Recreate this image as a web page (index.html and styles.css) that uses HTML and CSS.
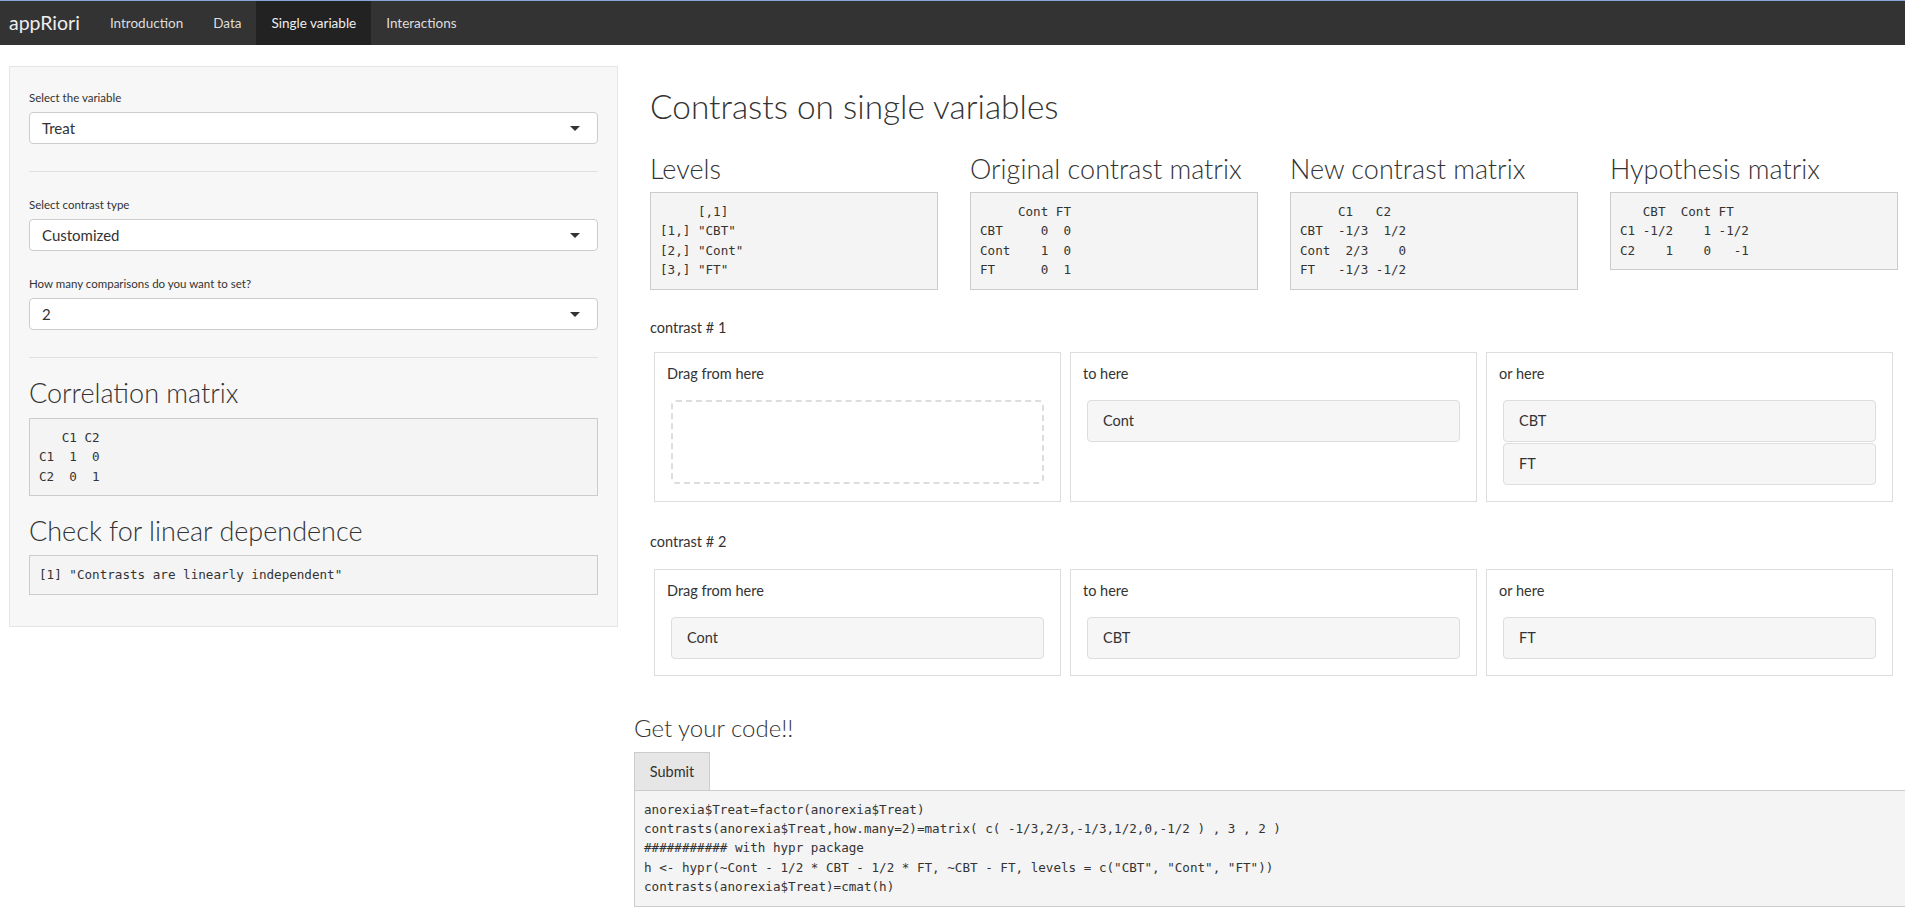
FILE: index.html
```
<!DOCTYPE html>
<html lang="en">
<head>
<meta charset="utf-8">
<title>appRiori</title>
<link rel="stylesheet" href="styles.css">
</head>
<body>
<nav class="navbar">
  <span class="brand">appRiori</span>
  <ul class="nav">
    <li><a>Introduction</a></li>
    <li><a>Data</a></li>
    <li class="active"><a>Single variable</a></li>
    <li><a>Interactions</a></li>
  </ul>
</nav>

<div class="layout">
  <aside class="well">
    <div class="field">
      <label class="label">Select the variable</label>
      <div class="select"><span>Treat</span><i class="caret"></i></div>
    </div>
    <hr class="rule">
    <div class="field">
      <label class="label">Select contrast type</label>
      <div class="select"><span>Customized</span><i class="caret"></i></div>
    </div>
    <div class="field field-second">
      <label class="label">How many comparisons do you want to set?</label>
      <div class="select"><span>2</span><i class="caret"></i></div>
    </div>
    <hr class="rule tight">
    <h3 class="h2 side-h">Correlation matrix</h3>
    <pre class="out">   C1 C2
C1  1  0
C2  0  1</pre>
    <h3 class="h2 side-h second">Check for linear dependence</h3>
    <pre class="out">[1] "Contrasts are linearly independent"</pre>
  </aside>

  <main class="main">
    <section class="upper">
      <h1 class="h1">Contrasts on single variables</h1>
      <div class="matrices">
        <div class="mat">
          <h3 class="h2">Levels</h3>
          <pre class="out">     [,1]  
[1,] "CBT" 
[2,] "Cont"
[3,] "FT"  </pre>
        </div>
        <div class="mat">
          <h3 class="h2">Original contrast matrix</h3>
          <pre class="out">     Cont FT
CBT     0  0
Cont    1  0
FT      0  1</pre>
        </div>
        <div class="mat">
          <h3 class="h2">New contrast matrix</h3>
          <pre class="out">     C1   C2  
CBT  -1/3  1/2
Cont  2/3    0
FT   -1/3 -1/2</pre>
        </div>
        <div class="mat">
          <h3 class="h2">Hypothesis matrix</h3>
          <pre class="out">   CBT  Cont FT  
C1 -1/2    1 -1/2
C2    1    0   -1</pre>
        </div>
      </div>

      <p class="contrast-label first">contrast # 1</p>
      <div class="buckets">
        <div class="bucket">
          <div class="bucket-title">Drag from here</div>
          <div class="rank-list empty"></div>
        </div>
        <div class="bucket">
          <div class="bucket-title">to here</div>
          <div class="rank-list">
            <div class="item">Cont</div>
          </div>
        </div>
        <div class="bucket">
          <div class="bucket-title">or here</div>
          <div class="rank-list">
            <div class="item">CBT</div>
            <div class="item">FT</div>
          </div>
        </div>
      </div>

      <p class="contrast-label second">contrast # 2</p>
      <div class="buckets">
        <div class="bucket">
          <div class="bucket-title">Drag from here</div>
          <div class="rank-list">
            <div class="item">Cont</div>
          </div>
        </div>
        <div class="bucket">
          <div class="bucket-title">to here</div>
          <div class="rank-list">
            <div class="item">CBT</div>
          </div>
        </div>
        <div class="bucket">
          <div class="bucket-title">or here</div>
          <div class="rank-list">
            <div class="item">FT</div>
          </div>
        </div>
      </div>
    </section>

    <h3 class="h3 code-h">Get your code!!</h3>
    <button class="btn">Submit</button>
    <pre class="out code">anorexia$Treat=factor(anorexia$Treat)
contrasts(anorexia$Treat,how.many=2)=matrix( c( -1/3,2/3,-1/3,1/2,0,-1/2 ) , 3 , 2 )
########### with hypr package
h &lt;- hypr(~Cont - 1/2 * CBT - 1/2 * FT, ~CBT - FT, levels = c("CBT", "Cont", "FT"))
contrasts(anorexia$Treat)=cmat(h)</pre>
  </main>
</div>
</body>
</html>
```

FILE: styles.css
```
* { box-sizing: border-box; }

html, body {
  margin: 0;
  padding: 0;
  overflow: hidden;
}

body {
  font-family: Lato, "Open Sans", sans-serif;
  color: #333;
  background: #fff;
  width: 1905px;
  height: 923px;
}

.navbar {
  height: 45px;
  background: #333;
  border-top: 1px solid #8aa6d6;
  display: flex;
  align-items: center;
}

.brand {
  color: #eee;
  font-size: 19.5px;
  padding: 0 15px 0 9px;
  line-height: 44px;
}

.nav {
  list-style: none;
  margin: 0;
  padding: 0;
  display: flex;
  height: 44px;
}

.nav li a {
  display: block;
  padding: 0 15px;
  line-height: 44px;
  color: #ddd;
  font-size: 13.5px;
}

.nav li.active a {
  background: #222;
  color: #eee;
}

.layout {
  display: flex;
  gap: 16px;
  padding: 21px 0 0 9px;
  width: 2000px;
}

.well {
  flex: none;
  width: 609px;
  height: 561px;
  background: #f7f7f7;
  border: 1px solid #e5e5e5;
  padding: 23px 19px 0;
}

.field { display: flex; flex-direction: column; }
.field-second { margin-top: 25px; }

.label {
  font-size: 11.5px;
  line-height: 16px;
  color: #333;
  margin-bottom: 6px;
}

.select {
  height: 32px;
  background: #fff;
  border: 1px solid #ccc;
  border-radius: 4px;
  display: flex;
  align-items: center;
  justify-content: space-between;
  padding: 0 17px 0 12px;
  font-size: 15px;
  color: #333;
}

.caret {
  width: 0;
  height: 0;
  border-left: 5px solid transparent;
  border-right: 5px solid transparent;
  border-top: 5px solid #333;
}

.rule {
  border: 0;
  border-top: 1px solid #e0e0e0;
  margin: 27px 0 25px;
}

.rule.tight { margin-bottom: 21px; }

.h1 {
  font-weight: 300;
  font-size: 33.4px;
  line-height: 36px;
  margin: 22px 0 0;
  color: #333;
}

.h2 {
  font-weight: 300;
  font-size: 27px;
  line-height: 28px;
  margin: 0;
  color: #333;
}

.h3 {
  font-weight: 300;
  font-size: 24px;
  line-height: 28px;
  margin: 0;
  color: #333;
}

.side-h { margin-top: 0; margin-bottom: 11px; }
.side-h.second { margin-top: 21px; margin-bottom: 10px; }

.out {
  margin: 0;
  background: #f4f4f4;
  border: 1px solid #ccc;
  padding: 9px 9px;
  font-family: "DejaVu Sans Mono", "Liberation Mono", monospace;
  font-size: 12.6px;
  line-height: 19.4px;
  color: #333;
  white-space: pre;
  overflow: hidden;
}

.main {
  flex: none;
  width: 1290px;
}

.upper { padding: 0 16px; }

.matrices {
  display: grid;
  grid-template-columns: repeat(4, 288px);
  column-gap: 32px;
  align-items: start;
  margin-top: 31px;
}

.mat .h2 { margin-bottom: 9px; }

.contrast-label {
  font-size: 14.5px;
  line-height: 20px;
  margin: 0;
}
.contrast-label.first { margin-top: 28px; margin-bottom: 14px; }
.contrast-label.second { margin-top: 30px; margin-bottom: 17px; }

.buckets {
  display: grid;
  grid-template-columns: repeat(3, 407px);
  column-gap: 9px;
  margin-left: 4px;
  align-items: stretch;
}

.bucket {
  border: 1px solid #ddd;
  padding: 10px 12px 16px;
  background: #fff;
}

.bucket-title {
  font-size: 14.5px;
  line-height: 22px;
  margin-bottom: 15px;
  color: #333;
}

.rank-list { margin: 0 4px; }

.rank-list.empty {
  height: 84px;
  border: 2px dashed #ddd;
  border-radius: 5px;
}

.item {
  background: #f6f6f6;
  border: 1px solid #ddd;
  border-radius: 4px;
  padding: 0 15px;
  height: 42px;
  line-height: 40px;
  font-size: 14.5px;
  color: #333;
  margin-bottom: 1px;
}

.item:last-child { margin-bottom: 0; }

.code-h { margin-top: 38px; }

.btn {
  display: block;
  margin-top: 10px;
  width: 76px;
  height: 38px;
  background: #e6e6e6;
  border: 1px solid #ccc;
  border-bottom: 0;
  font-family: Lato, "Open Sans", sans-serif;
  font-size: 14.5px;
  color: #333;
  padding: 0;
}

.code {
  width: 1290px;
  padding: 9px 9px;
}
```
